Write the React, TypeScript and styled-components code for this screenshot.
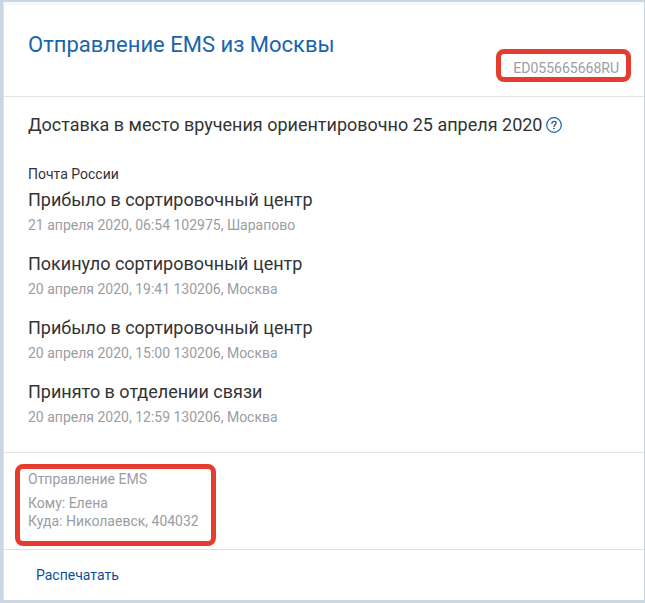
import React from "react";
import styled, { createGlobalStyle } from "styled-components";

const Global = createGlobalStyle`
  html, body { margin: 0; padding: 0; background: #fff; }
  body { font-family: Roboto, "Noto Sans", sans-serif; }
`;

const Frame = styled.div`
  position: relative;
  box-sizing: border-box;
  width: 645px;
  height: 603px;
  overflow: hidden;
  background: #c9d6e3;
  padding: 2px 1px 2px 3px;
`;

const Card = styled.div`
  box-sizing: border-box;
  height: 599px;
  background: #fff;
  border-left: 1px solid #dfe1e4;
  border-top: 3px solid #f7f8f9;
  border-bottom: 1px solid #d5d7da;
  display: flex;
  flex-direction: column;
`;

const Header = styled.header`
  height: 92px;
  box-sizing: border-box;
  border-bottom: 1px solid #e3e5e8;
  padding: 26px 25px 0 24px;
  display: flex;
  flex-direction: column;
`;

const Title = styled.h1`
  margin: 0;
  font-size: 22px;
  font-weight: 400;
  line-height: 28px;
  color: #1a64ad;
`;

const TrackCode = styled.div`
  margin-top: 0;
  align-self: flex-end;
  font-size: 14px;
  line-height: 18px;
  color: #9aa0a8;
`;

const Main = styled.main`
  flex: 1;
  padding: 16px 24px 0;
`;

const Estimate = styled.div`
  display: flex;
  align-items: center;
  gap: 4px;
  font-size: 18px;
  line-height: 24px;
  color: #333;
`;

const Carrier = styled.div`
  margin-top: 28px;
  font-size: 14px;
  line-height: 18px;
  color: #333;
`;

const EventList = styled.ul`
  list-style: none;
  margin: 0;
  padding: 0;
`;

const EventItem = styled.li`
  height: 64px;
  padding-top: 5px;
  box-sizing: border-box;
`;

const EventTitle = styled.div`
  font-size: 18px;
  line-height: 24px;
  color: #333;
`;

const EventMeta = styled.div`
  margin-top: 4px;
  font-size: 14px;
  line-height: 18px;
  color: #9a9da2;
`;

const Recipient = styled.section`
  height: 97px;
  box-sizing: border-box;
  border-top: 1px solid #e3e5e8;
  padding: 17px 24px 0;
  font-size: 14px;
  line-height: 18px;
  color: #9a9da2;
`;

const RecipientTitle = styled.div`
  margin-bottom: 6px;
`;

const Footer = styled.footer`
  height: 51px;
  box-sizing: border-box;
  border-top: 1px solid #dcdee1;
  padding: 15px 32px 0;
`;

const PrintLink = styled.a`
  font-size: 14px;
  line-height: 20px;
  color: #0b4f9c;
  text-decoration: none;
`;

const Callout = styled.div<{ $x: number; $y: number; $w: number; $h: number }>`
  position: absolute;
  left: ${(p) => p.$x}px;
  top: ${(p) => p.$y}px;
  width: ${(p) => p.$w}px;
  height: ${(p) => p.$h}px;
  box-sizing: border-box;
  border: 5px solid #e63c30;
  border-radius: 8px;
`;

const HelpIcon = () => (
  <svg width="16" height="16" viewBox="0 0 16 16" fill="none" aria-hidden="true">
    <circle cx="8" cy="8" r="7.3" stroke="#1466b0" strokeWidth="1.2" />
    <path
      d="M5.9 6.4c0-1.2 1-2 2.1-2s2.1.8 2.1 1.8c0 1.5-2.1 1.6-2.1 3.2"
      stroke="#1f4f7f"
      strokeWidth="1.2"
      strokeLinecap="round"
    />
    <circle cx="8" cy="11.5" r=".8" fill="#1f4f7f" />
  </svg>
);

const events = [
  { title: "Прибыло в сортировочный центр", meta: "21 апреля 2020, 06:54 102975, Шарапово" },
  { title: "Покинуло сортировочный центр", meta: "20 апреля 2020, 19:41 130206, Москва" },
  { title: "Прибыло в сортировочный центр", meta: "20 апреля 2020, 15:00 130206, Москва" },
  { title: "Принято в отделении связи", meta: "20 апреля 2020, 12:59 130206, Москва" },
];

export default function App() {
  return (
    <>
      <Global />
      <Frame>
        <Card>
          <Header>
            <Title>Отправление EMS из Москвы</Title>
            <TrackCode>ED055665668RU</TrackCode>
          </Header>
          <Main>
            <Estimate>
              Доставка в место вручения ориентировочно 25 апреля 2020
              <HelpIcon />
            </Estimate>
            <Carrier>Почта России</Carrier>
            <EventList>
              {events.map((e, i) => (
                <EventItem key={i}>
                  <EventTitle>{e.title}</EventTitle>
                  <EventMeta>{e.meta}</EventMeta>
                </EventItem>
              ))}
            </EventList>
          </Main>
          <Recipient>
            <RecipientTitle>Отправление EMS</RecipientTitle>
            <div>Кому: Елена</div>
            <div>Куда: Николаевск, 404032</div>
          </Recipient>
          <Footer>
            <PrintLink href="#">Распечатать</PrintLink>
          </Footer>
        </Card>
        <Callout $x={496} $y={49} $w={135} $h={33} />
        <Callout $x={15} $y={464} $w={201} $h={82} />
      </Frame>
    </>
  );
}
